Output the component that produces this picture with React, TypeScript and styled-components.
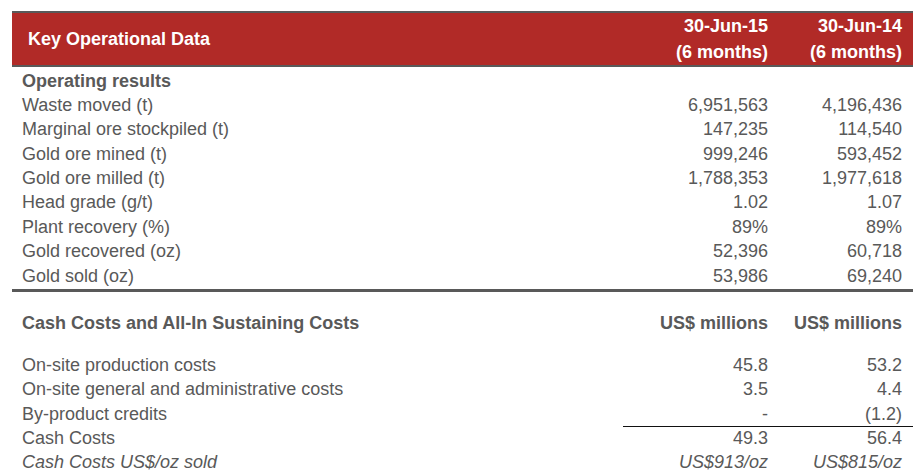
import React from 'react'
import styled, { createGlobalStyle } from 'styled-components'

const GlobalStyle = createGlobalStyle`
  body {
    margin: 0;
    background: #ffffff;
    font-family: "Liberation Sans", Arial, sans-serif;
  }
`

const Page = styled.div`
  padding: 11px 8px 0 12px;
  width: 901px;
`

const Grid = styled.div`
  display: grid;
  grid-template-columns: 1fr 156px 134px;
`

const Header = styled(Grid)`
  background: #b12a27;
  border-top: 2px solid #595959;
  border-bottom: 2px solid #595959;
  margin-bottom: 1.5px;
  color: #ffffff;
  font-size: 18px;
  font-weight: 700;
`

const HeaderTitle = styled.div`
  display: flex;
  align-items: center;
  padding-left: 16px;
  height: 52px;
`

const HeaderDate = styled.div`
  text-align: right;
  padding-right: 11px;
  line-height: 26px;
`

const Row = styled(Grid)<{ $bold?: boolean; $italic?: boolean }>`
  height: 24.4px;
  line-height: 24.4px;
  font-size: 18px;
  color: #595959;
  font-weight: ${p => (p.$bold ? 700 : 400)};
  font-style: ${p => (p.$italic ? 'italic' : 'normal')};
  white-space: nowrap;
`

const Label = styled.div`
  padding-left: 10px;
`

const Value = styled.div<{ $rule?: boolean }>`
  text-align: right;
  padding-right: 11px;
  border-bottom: ${p => (p.$rule ? '1px solid #111111' : 'none')};
  box-sizing: border-box;
`

const Divider = styled.div`
  margin-top: 0.5px;
  border-bottom: 3px solid #595959;
`

const SectionHead = styled(Row)`
  margin-top: 19px;
  margin-bottom: 18px;
`

type Line = {
  label: string
  a?: string
  b?: string
  bold?: boolean
  italic?: boolean
  rule?: boolean
}

const operating: Line[] = [
  { label: 'Operating results', bold: true },
  { label: 'Waste moved (t)', a: '6,951,563', b: '4,196,436' },
  { label: 'Marginal ore stockpiled (t)', a: '147,235', b: '114,540' },
  { label: 'Gold ore mined (t)', a: '999,246', b: '593,452' },
  { label: 'Gold ore milled (t)', a: '1,788,353', b: '1,977,618' },
  { label: 'Head grade (g/t)', a: '1.02', b: '1.07' },
  { label: 'Plant recovery (%)', a: '89%', b: '89%' },
  { label: 'Gold recovered (oz)', a: '52,396', b: '60,718' },
  { label: 'Gold sold (oz)', a: '53,986', b: '69,240' },
]

const costs: Line[] = [
  { label: 'On-site production costs', a: '45.8', b: '53.2' },
  { label: 'On-site general and administrative costs', a: '3.5', b: '4.4' },
  { label: 'By-product credits', a: '-', b: '(1.2)', rule: true },
  { label: 'Cash Costs', a: '49.3', b: '56.4' },
  { label: 'Cash Costs US$/oz sold', a: 'US$913/oz', b: 'US$815/oz', italic: true },
]

const DataRow = ({ line }: { line: Line }) => (
  <Row $bold={line.bold} $italic={line.italic}>
    <Label>{line.label}</Label>
    <Value $rule={line.rule}>{line.a}</Value>
    <Value $rule={line.rule}>{line.b}</Value>
  </Row>
)

const App = () => {
  return (
    <>
      <GlobalStyle />
      <Page>
        <Header>
          <HeaderTitle>Key Operational Data</HeaderTitle>
          <HeaderDate>30-Jun-15<br />(6 months)</HeaderDate>
          <HeaderDate>30-Jun-14<br />(6 months)</HeaderDate>
        </Header>
        {operating.map(line => (
          <DataRow key={line.label} line={line} />
        ))}
        <Divider />
        <SectionHead $bold>
          <Label>Cash Costs and All-In Sustaining Costs</Label>
          <Value>US$ millions</Value>
          <Value>US$ millions</Value>
        </SectionHead>
        {costs.map(line => (
          <DataRow key={line.label} line={line} />
        ))}
      </Page>
    </>
  )
}

export default App
